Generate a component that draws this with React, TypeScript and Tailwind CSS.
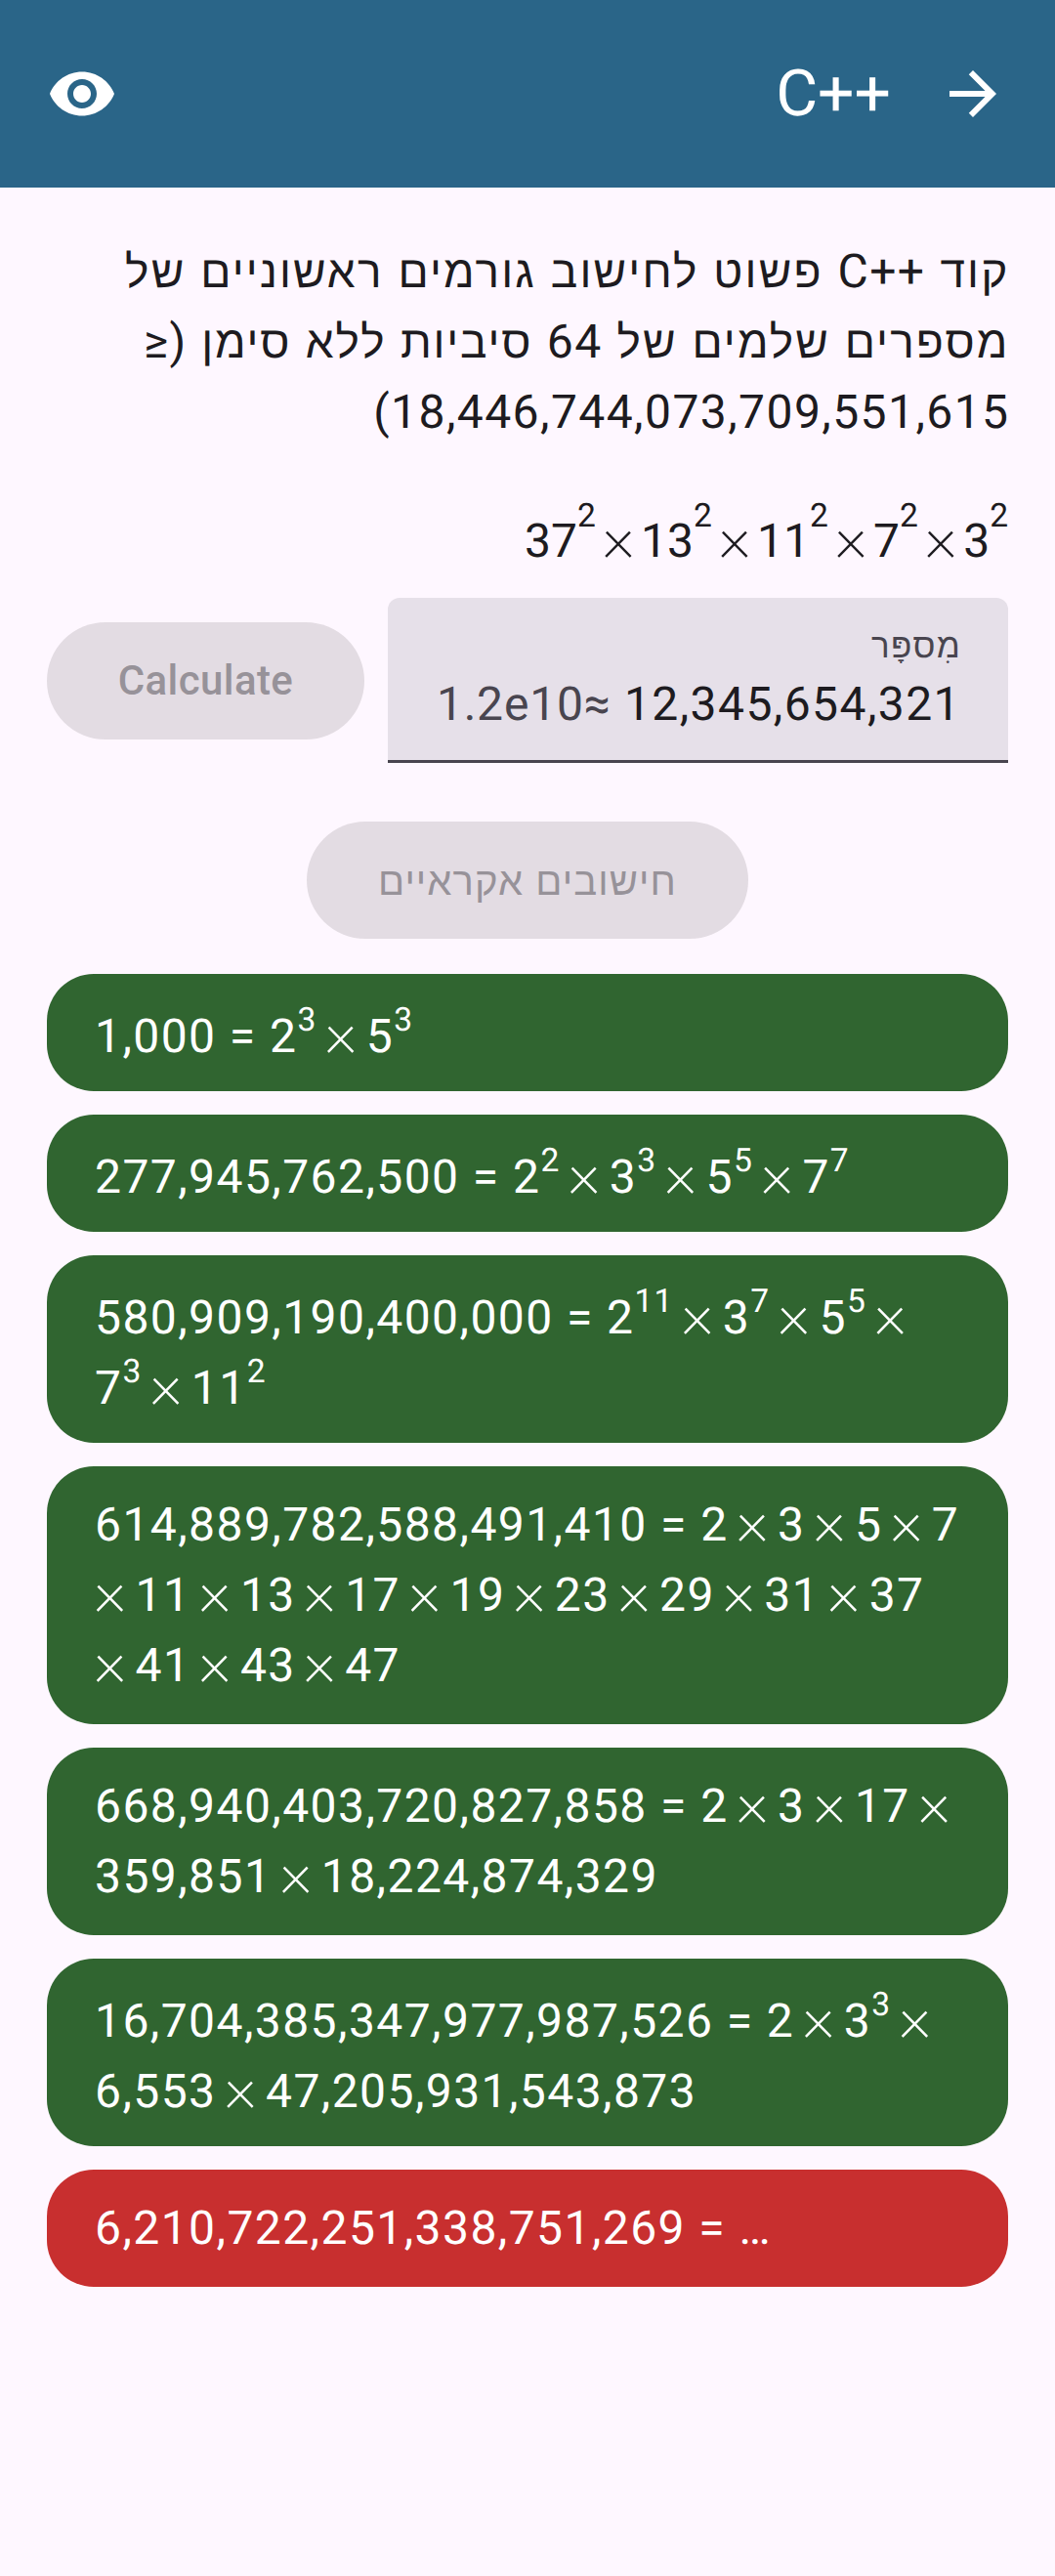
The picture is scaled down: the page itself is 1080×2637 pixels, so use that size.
import type { ReactNode } from "react";

type Token = string | [string, string];

interface Result {
  lines: { lead?: string; tokens: Token[] }[];
  raised?: boolean;
  failed?: boolean;
}

const RESULTS: Result[] = [
  { raised: true, lines: [{ lead: "1,000 = ", tokens: [["2", "3"], "×", ["5", "3"]] }] },
  {
    raised: true,
    lines: [
      {
        lead: "277,945,762,500 = ",
        tokens: [["2", "2"], "×", ["3", "3"], "×", ["5", "5"], "×", ["7", "7"]],
      },
    ],
  },
  {
    raised: true,
    lines: [
      {
        lead: "580,909,190,400,000 = ",
        tokens: [["2", "11"], "×", ["3", "7"], "×", ["5", "5"], "×"],
      },
      { tokens: [["7", "3"], "×", ["11", "2"]] },
    ],
  },
  {
    lines: [
      { lead: "614,889,782,588,491,410 = ", tokens: ["2", "×", "3", "×", "5", "×", "7"] },
      {
        tokens: ["×", "11", "×", "13", "×", "17", "×", "19", "×", "23", "×", "29", "×", "31", "×", "37"],
      },
      { tokens: ["×", "41", "×", "43", "×", "47"] },
    ],
  },
  {
    lines: [
      { lead: "668,940,403,720,827,858 = ", tokens: ["2", "×", "3", "×", "17", "×"] },
      { tokens: ["359,851", "×", "18,224,874,329"] },
    ],
  },
  {
    raised: true,
    lines: [
      { lead: "16,704,385,347,977,987,526 = ", tokens: ["2", "×", ["3", "3"], "×"] },
      { tokens: ["6,553", "×", "47,205,931,543,873"] },
    ],
  },
  { failed: true, lines: [{ lead: "6,210,722,251,338,751,269 = ", tokens: ["…"] }] },
];

const POWERS: [string, string][] = [
  ["37", "2"],
  ["13", "2"],
  ["11", "2"],
  ["7", "2"],
  ["3", "2"],
];

function Times({ wide = true }: { wide?: boolean }) {
  return (
    <span
      className={
        wide
          ? "mx-[8.9px] inline-block h-[72px] w-[32.7px] pr-[1.5px] text-center align-top"
          : "mx-[7.5px] inline-block h-[72px] w-[31.2px] text-center align-top"
      }
    >
      <span className="relative -top-[4.5px] -mx-3 text-[65px] leading-[72px] font-[200] tracking-normal">×</span>
    </span>
  );
}

function Hebrew({ className, children }: { className: string; children: ReactNode }) {
  return <span className={`${className} font-['Liberation_Sans'] text-[46px] leading-none`}>{children}</span>;
}

function Line({ lead, tokens }: { lead?: string; tokens: Token[] }) {
  const startsWithTimes = tokens[0] === "×" && !lead;
  return (
    <div className={startsWithTimes ? "-ml-[8.9px] h-[72px]" : "h-[72px]"}>
      {lead && <span className="whitespace-pre">{lead}</span>}
      {tokens.map((t, i) =>
        t === "×" ? (
          <Times key={i} />
        ) : Array.isArray(t) ? (
          <span key={i}>
            {t[0]}
            <span className="relative -top-[22px] text-[33.6px] leading-none tracking-[1.05px]">{t[1]}</span>
          </span>
        ) : (
          <span key={i}>{t}</span>
        ),
      )}
    </div>
  );
}

function Card({ result }: { result: Result }) {
  const pad = result.raised ? "pt-7 pb-5" : "py-6";
  const tone = result.failed ? "bg-[#c82f2f]" : "bg-[#306530]";
  return (
    <div className={`${pad} ${tone} rounded-[48px] pr-12 pl-[49px] whitespace-nowrap text-white`}>
      {result.lines.map((l, i) => (
        <Line key={i} {...l} />
      ))}
    </div>
  );
}

function DisabledButton({ className, children }: { className: string; children: ReactNode }) {
  return (
    <button
      disabled
      className={`${className} h-[120px] shrink-0 rounded-full bg-[#e3dce3] text-[#979299]`}
    >
      {children}
    </button>
  );
}

export default function App() {
  return (
    <div className="h-[2637px] w-[1080px] overflow-hidden bg-[#fef7ff] font-['Roboto','Open_Sans',sans-serif] text-[48px] leading-[72px] tracking-[1.43px] text-[#1d1b20] [text-rendering:geometricPrecision]">
      <header className="flex h-48 items-center justify-between bg-[#2a6588] px-12 text-white">
        <svg viewBox="0 0 24 24" className="size-[72px]" fill="currentColor">
          <path d="M12 4.5C7 4.5 2.73 7.61 1 12c1.73 4.39 6 7.5 11 7.5s9.27-3.11 11-7.5c-1.73-4.39-6-7.5-11-7.5zM12 17c-2.76 0-5-2.24-5-5s2.24-5 5-5 5 2.24 5 5-2.24 5-5 5zm0-8c-1.66 0-3 1.34-3 3s1.34 3 3 3 3-1.34 3-3-1.34-3-3-3z" />
        </svg>
        <div className="flex items-center gap-12">
          <h1 className="pt-0.5 text-[66px] leading-[84px] tracking-normal">C++</h1>
          <svg viewBox="0 0 24 24" className="size-[72px]" fill="currentColor">
            <path d="M12 4l-1.41 1.41L16.17 11H4v2h12.17l-5.58 5.59L12 20l8-8z" />
          </svg>
        </div>
      </header>

      <main className="px-12 pt-[50px]">
        <div dir="rtl" className="-mr-[1.5px] h-[216px] whitespace-nowrap">
          <div className="h-[72px]">
            <Hebrew className="tracking-[2.15px]">קוד </Hebrew>
            <bdi dir="ltr">C++</bdi>
            <Hebrew className="tracking-[2.15px]"> פשוט לחישוב גורמים ראשוניים של</Hebrew>
          </div>
          <div className="h-[72px]">
            <Hebrew className="tracking-[2.1px]">מספרים שלמים של </Hebrew>64
            <Hebrew className="tracking-[1.8px]"> סיביות ללא סימן </Hebrew>(≤
          </div>
          <div className="h-[72px]">18,446,744,073,709,551,615)</div>
        </div>

        <div className="mt-[60px] h-[72px] text-right tracking-normal whitespace-nowrap">
          {POWERS.map(([base, exp], i) => (
            <span key={base}>
              {i > 0 && <Times wide={false} />}
              {base}
              <span className="relative -top-[31px] text-[33.6px] leading-none">{exp}</span>
            </span>
          ))}
        </div>

        <div className="mt-[22px] flex items-center gap-6">
          <DisabledButton className="w-[325px] text-[42px] font-medium tracking-[0.4px]">Calculate</DisabledButton>
          <div className="h-[169px] w-[635px] shrink-0 rounded-t-xl border-b-[3px] border-[#49454f] bg-[#e6e0e9] pt-[25px] pr-12 whitespace-nowrap">
            <div
              dir="rtl"
              className="h-12 pt-px font-['Liberation_Sans'] text-[35px] leading-[48px] tracking-[1.3px] text-[#49454f]"
            >
              מִספָּר
            </div>
            <div className="text-right">
              <span className="tracking-[0.8px] text-[#49454f]">1.2e10≈</span> 12,345,654,321
            </div>
          </div>
        </div>

        <div className="mt-[60px] flex justify-center">
          <DisabledButton className="w-[452px] pt-0.5 font-['Liberation_Sans'] text-[40px] tracking-[1.1px]">
            חישובים אקראיים
          </DisabledButton>
        </div>

        <section className="mt-9 flex flex-col gap-6">
          {RESULTS.map((r, i) => (
            <Card key={i} result={r} />
          ))}
        </section>
      </main>
    </div>
  );
}
